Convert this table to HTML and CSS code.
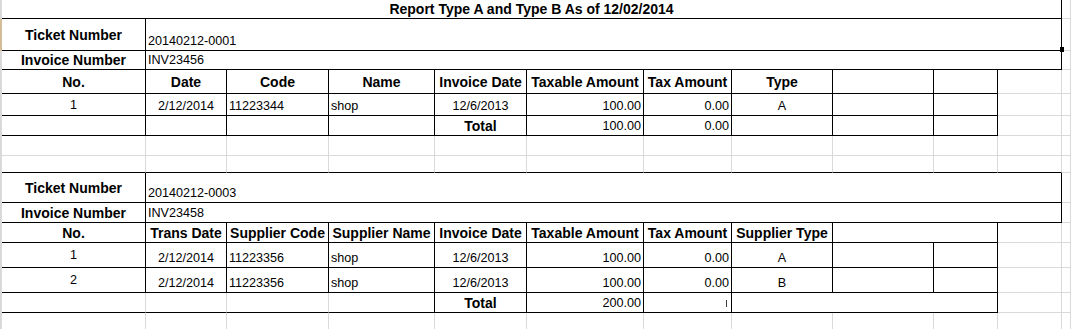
FILE: index.html
```html
<!DOCTYPE html>
<html>
<head>
<meta charset="utf-8">
<title>Report Type A and Type B</title>
<link rel="stylesheet" href="styles.css">
</head>
<body>
<div class="sheet">
  <span class="handle"></span>

  <div class="row row-title">
    <div class="c kb kr hd span-all">Report Type A and Type B As of 12/02/2014</div>
    <div class="c"></div>
  </div>

  <div class="row row-ticket">
    <div class="c k hd">Ticket Number</div>
    <div class="c k span-val">20140212-0001</div>
    <div class="c"></div>
  </div>
  <div class="row row-inv">
    <div class="c k hd">Invoice Number</div>
    <div class="c k span-val">INV23456</div>
    <div class="c"></div>
  </div>
  <div class="row row-head">
    <div class="c k hd">No.</div>
    <div class="c k hd">Date</div>
    <div class="c k hd">Code</div>
    <div class="c k hd">Name</div>
    <div class="c k hd">Invoice Date</div>
    <div class="c k hd">Taxable Amount</div>
    <div class="c k hd">Tax Amount</div>
    <div class="c k hd">Type</div>
    <div class="c k"></div>
    <div class="c k"></div>
    <div class="c"></div>
    <div class="c"></div>
  </div>
  <div class="row row-data">
    <div class="c k ctr mid">1</div>
    <div class="c k ctr">2/12/2014</div>
    <div class="c k">11223344</div>
    <div class="c k">shop</div>
    <div class="c k ctr">12/6/2013</div>
    <div class="c k rt">100.00</div>
    <div class="c k rt">0.00</div>
    <div class="c k ctr">A</div>
    <div class="c k"></div>
    <div class="c k"></div>
    <div class="c"></div>
    <div class="c"></div>
  </div>
  <div class="row row-total">
    <div class="c k"></div>
    <div class="c k"></div>
    <div class="c k"></div>
    <div class="c k"></div>
    <div class="c k hd">Total</div>
    <div class="c k rt">100.00</div>
    <div class="c k rt">0.00</div>
    <div class="c k"></div>
    <div class="c k"></div>
    <div class="c k"></div>
    <div class="c"></div>
    <div class="c"></div>
  </div>
  <div class="row row-blank">
    <div class="c"></div><div class="c"></div><div class="c"></div><div class="c"></div>
    <div class="c"></div><div class="c"></div><div class="c"></div><div class="c"></div>
    <div class="c"></div><div class="c"></div><div class="c"></div><div class="c"></div>
  </div>
  <div class="row row-gap">
    <div class="c kb"></div><div class="c kb"></div><div class="c kb"></div><div class="c kb"></div>
    <div class="c kb"></div><div class="c kb"></div><div class="c kb"></div><div class="c kb"></div>
    <div class="c kb"></div><div class="c kb"></div><div class="c kb"></div><div class="c"></div>
  </div>

  <div class="row row-ticket2">
    <div class="c k hd">Ticket Number</div>
    <div class="c k span-val">20140212-0003</div>
    <div class="c"></div>
  </div>
  <div class="row row-inv2">
    <div class="c k hd">Invoice Number</div>
    <div class="c k span-val">INV23458</div>
    <div class="c"></div>
  </div>
  <div class="row row-head2">
    <div class="c k hd">No.</div>
    <div class="c k hd">Trans Date</div>
    <div class="c k hd">Supplier Code</div>
    <div class="c k hd">Supplier Name</div>
    <div class="c k hd">Invoice Date</div>
    <div class="c k hd">Taxable Amount</div>
    <div class="c k hd">Tax Amount</div>
    <div class="c k hd">Supplier Type</div>
    <div class="c k span-2"></div>
    <div class="c"></div>
    <div class="c"></div>
  </div>
  <div class="row row-data2">
    <div class="c k ctr mid">1</div>
    <div class="c k ctr">2/12/2014</div>
    <div class="c k">11223356</div>
    <div class="c k">shop</div>
    <div class="c k ctr">12/6/2013</div>
    <div class="c k rt">100.00</div>
    <div class="c k rt">0.00</div>
    <div class="c k ctr">A</div>
    <div class="c k"></div>
    <div class="c k"></div>
    <div class="c"></div>
    <div class="c"></div>
  </div>
  <div class="row row-data2">
    <div class="c k ctr mid">2</div>
    <div class="c k ctr">2/12/2014</div>
    <div class="c k">11223356</div>
    <div class="c k">shop</div>
    <div class="c k ctr">12/6/2013</div>
    <div class="c k rt">100.00</div>
    <div class="c k rt">0.00</div>
    <div class="c k ctr">B</div>
    <div class="c k"></div>
    <div class="c k"></div>
    <div class="c"></div>
    <div class="c"></div>
  </div>
  <div class="row row-total">
    <div class="c kb"></div>
    <div class="c kb"></div>
    <div class="c kb"></div>
    <div class="c k"></div>
    <div class="c k hd">Total</div>
    <div class="c k rt">200.00</div>
    <div class="c k rt"><span class="tick"></span></div>
    <div class="c k span-3"></div>
    <div class="c"></div>
    <div class="c"></div>
  </div>
  <div class="row row-gap">
    <div class="c"></div><div class="c"></div><div class="c"></div><div class="c"></div>
    <div class="c"></div><div class="c"></div><div class="c"></div><div class="c"></div>
    <div class="c"></div><div class="c"></div><div class="c"></div><div class="c"></div>
  </div>
</div>
</body>
</html>
```
FILE: styles.css
```css
html, body {
  margin: 0;
  padding: 0;
  background: #ffffff;
}

body {
  font-family: "Liberation Sans", Arial, sans-serif;
  color: #000000;
  overflow: hidden;
}

.sheet {
  --cols: 144px 81px 102px 106px 92px 117px 88px 101px 101px 64px 64px 9px;
  --grid: #d9d9d9;
  position: relative;
  width: 1069px;
  border-left: 2px solid var(--grid);
}

.sheet::before {
  content: "";
  position: absolute;
  left: -2px;
  top: 19px;
  width: 2px;
  height: 32px;
  background: #d2bd98;
}

.handle {
  position: absolute;
  left: 1058px;
  top: 47px;
  width: 4px;
  height: 5px;
  background: #000000;
  z-index: 2;
}

.row {
  display: grid;
  grid-template-columns: var(--cols);
}

.row-title   { height: 19px; }
.row-ticket  { height: 32px; }
.row-inv     { height: 19px; }
.row-head    { height: 24px; }
.row-data    { height: 22px; }
.row-total   { height: 20px; }
.row-blank   { height: 20px; }
.row-gap     { height: 17px; }
.row-ticket2 { height: 30px; }
.row-inv2    { height: 20px; }
.row-head2   { height: 20px; }
.row-data2   { height: 25px; }

.c {
  box-sizing: border-box;
  min-width: 0;
  display: flex;
  align-items: flex-end;
  justify-content: flex-start;
  padding: 0 2px 2px 2px;
  border-right: 1px solid var(--grid);
  border-bottom: 1px solid var(--grid);
  font-size: 12.6px;
  line-height: 14px;
  white-space: nowrap;
  overflow: hidden;
}

.k {
  border-right-color: #000000;
  border-bottom-color: #000000;
}

.kb {
  border-bottom-color: #000000;
}

.kr {
  border-right-color: #000000;
}

.span-all { grid-column: span 11; }
.span-val { grid-column: span 10; }
.span-2   { grid-column: span 2; }
.span-3   { grid-column: span 3; }

.ctr { justify-content: center; }
.rt  { justify-content: flex-end; }

.mid {
  align-items: center;
  padding-bottom: 0;
}

.hd {
  font-weight: bold;
  font-size: 14px;
  line-height: 16px;
  align-items: center;
  justify-content: center;
  padding-bottom: 0;
}

.tick {
  display: inline-block;
  width: 1px;
  height: 7px;
  margin: 0 2px 3px 0;
  background: #3a3a3a;
}
```
